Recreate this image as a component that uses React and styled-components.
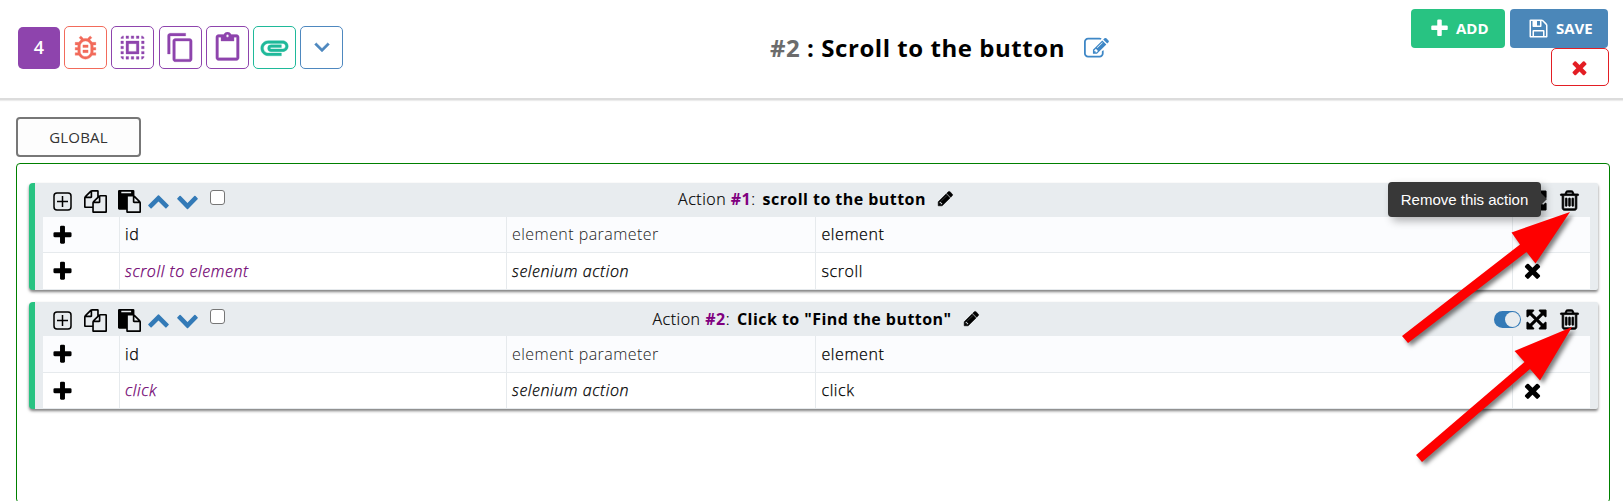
import React from 'react';
import styled, { createGlobalStyle } from 'styled-components';
import {
  MdOutlineBugReport,
  MdSelectAll,
  MdContentCopy,
  MdContentPaste,
  MdAttachment,
  MdKeyboardArrowDown,
} from 'react-icons/md';

const PATHS = {
  plus: 'M1600 736v192q0 40-28 68t-68 28h-416v416q0 40-28 68t-68 28h-192q-40 0-68-28t-28-68v-416h-416q-40 0-68-28t-28-68v-192q0-40 28-68t68-28h416v-416q0-40 28-68t68-28h192q40 0 68 28t28 68v416h416q40 0 68 28t28 68z',
  times: 'M1490 1322q0 40-28 68l-136 136q-28 28-68 28t-68-28l-294-294-294 294q-28 28-68 28t-68-28l-136-136q-28-28-28-68t28-68l294-294-294-294q-28-28-28-68t28-68l136-136q28-28 68-28t68 28l294 294 294-294q28-28 68-28t68 28l136 136q28 28 28 68t-28 68l-294 294 294 294q28 28 28 68z',
  up: 'M1683 1331l-166 165q-19 19-45 19t-45-19l-531-531-531 531q-19 19-45 19t-45-19l-166-165q-19-19-19-45.5t19-45.5l742-741q19-19 45-19t45 19l742 741q19 19 19 45.5t-19 45.5z',
  down: 'M1683 808l-742 741q-19 19-45 19t-45-19l-742-741q-19-19-19-45.5t19-45.5l166-165q19-19 45-19t45 19l531 531 531-531q19-19 45-19t45 19l166 165q19 19 19 45.5t-19 45.5z',
  pencil: 'M491 1536l91-91-235-235-91 91v107h128v128h107zm523-928q0-22-22-22-10 0-17 7l-542 542q-7 7-7 17 0 22 22 22 10 0 17-7l542-542q7-7 7-17zm-54-192l416 416-832 832h-416v-416zm683 96q0 53-37 90l-166 166-416-416 166-165q36-38 90-38 53 0 91 38l235 234q37 39 37 91z',
  trash: 'M704 736v576q0 14-9 23t-23 9h-64q-14 0-23-9t-9-23v-576q0-14 9-23t23-9h64q14 0 23 9t9 23zm256 0v576q0 14-9 23t-23 9h-64q-14 0-23-9t-9-23v-576q0-14 9-23t23-9h64q14 0 23 9t9 23zm256 0v576q0 14-9 23t-23 9h-64q-14 0-23-9t-9-23v-576q0-14 9-23t23-9h64q14 0 23 9t9 23zm128 724v-948h-896v948q0 22 7 40.5t14.5 27 10.5 8.5h832q3 0 10.5-8.5t14.5-27 7-40.5zm-672-1076h448l-48-117q-7-9-17-11h-317q-10 2-17 11zm928 32v64q0 14-9 23t-23 9h-96v948q0 83-47 143.5t-113 60.5h-832q-66 0-113-58.5t-47-141.5v-952h-96q-14 0-23-9t-9-23v-64q0-14 9-23t23-9h309l70-167q15-37 54-63t79-26h320q40 0 79 26t54 63l70 167h309q14 0 23 9t9 23z',
  files: 'M1696 384q40 0 68 28t28 68v1216q0 40-28 68t-68 28h-960q-40 0-68-28t-28-68v-288h-544q-40 0-68-28t-28-68v-672q0-40 20-88t48-76l408-408q28-28 76-48t88-20h416q40 0 68 28t28 68v328q68-40 128-40h416zm-544 213l-299 299h299v-299zm-640-384l-299 299h299v-299zm196 647l316-316v-416h-384v416q0 40-28 68t-68 28h-416v640h512v-256q0-40 20-88t48-76zm956 804v-1152h-384v416q0 40-28 68t-68 28h-416v640h896z',
  paste: 'M768 1664h896v-640h-416q-40 0-68-28t-28-68v-416h-384v1152zm256-1440v-64q0-13-9.5-22.5t-22.5-9.5h-704q-13 0-22.5 9.5t-9.5 22.5v64q0 13 9.5 22.5t22.5 9.5h704q13 0 22.5-9.5t9.5-22.5zm256 672h299l-299-299v299zm512 128v672q0 40-28 68t-68 28h-960q-40 0-68-28t-28-68v-160h-544q-40 0-68-28t-28-68v-1344q0-40 28-68t68-28h1088q40 0 68 28t28 68v328q21 13 36 28l408 408q28 28 48 76t20 88z',
  floppy: 'M512 1536h768v-384h-768v384zm896 0h128v-896q0-14-10-38.5t-20-34.5l-281-281q-10-10-34-20t-39-10v416q0 40-28 68t-68 28h-576q-40 0-68-28t-28-68v-416h-128v1280h128v-416q0-40 28-68t68-28h832q40 0 68 28t28 68v416zm-384-928v-320q0-13-9.5-22.5t-22.5-9.5h-192q-13 0-22.5 9.5t-9.5 22.5v320q0 13 9.5 22.5t22.5 9.5h192q13 0 22.5-9.5t9.5-22.5zm640 32v928q0 40-28 68t-68 28h-1344q-40 0-68-28t-28-68v-1344q0-40 28-68t68-28h928q40 0 88 20t76 48l280 280q28 28 48 76t20 88z',
  expand: 'M1411 541l-355 355 355 355 144-144q29-31 70-14 39 17 39 59v448q0 26-19 45t-45 19h-448q-42 0-59-40-17-39 14-69l144-144-355-355-355 355 144 144q31 30 14 69-17 40-59 40h-448q-26 0-45-19t-19-45v-448q0-42 40-59 39-17 69 14l144 144 355-355-355-355-144 144q-19 19-45 19-12 0-24-5-40-17-40-59v-448q0-26 19-45t45-19h448q42 0 59 40 17 39-14 69l-144 144 355 355 355-355-144-144q-31-30-14-69 17-40 59-40h448q26 0 45 19t19 45v448q0 42-39 59-13 5-25 5-26 0-45-19z',
  edit: 'M888 1184l116-116-152-152-116 116v56h96v96h56zm440-720q-16-16-33 1l-350 350q-17 17-1 33t33-1l350-350q17-17 1-33zm80 594v190q0 119-84.5 203.5t-203.5 84.5h-832q-119 0-203.5-84.5t-84.5-203.5v-832q0-119 84.5-203.5t203.5-84.5h832q63 0 117 25 15 7 18 23 3 17-9 29l-49 49q-14 14-32 8-23-6-45-6h-832q-66 0-113 47t-47 113v832q0 66 47 113t113 47h832q66 0 113-47t47-113v-126q0-13 9-22l64-64q15-15 35-7t20 29zm-96-738l288 288-672 672h-288v-288zm444 132l-92 92-288-288 92-92q28-28 68-28t68 28l152 152q28 28 28 68t-28 68z',
};

const GlobalStyle = createGlobalStyle`
  * { box-sizing: border-box; }
  body {
    margin: 0;
    background: #fff;
    color: #000;
    font-family: "Open Sans", "Noto Sans", sans-serif;
    overflow: hidden;
  }
`;

const Page = styled.div`
  position: relative;
  width: 1623px;
  height: 501px;
  overflow: hidden;
`;

const Glyph = styled.svg`
  display: block;
  flex: none;
  width: ${(p) => p.$size}px;
  height: ${(p) => p.$size}px;
  fill: ${(p) => p.$color || 'currentColor'};
  stroke: ${(p) => p.$color || 'currentColor'};
  stroke-width: ${(p) => p.$bold || 0};
`;

const Icon = ({ name, size = 23, color, bold }) => (
  <Glyph viewBox="0 0 1792 1792" $size={size} $color={color} $bold={bold} aria-hidden="true">
    <path d={PATHS[name]} />
  </Glyph>
);

const Header = styled.header`
  display: grid;
  grid-template-columns: 700px 1fr 240px;
  height: 100px;
  border-bottom: 2px solid #dcdcdc;
  box-shadow: 0 1px 1px #ececec;
`;

const Tools = styled.div`
  display: flex;
  gap: 4.2px;
  padding: 26px 0 0 17px;
`;

const ToolButton = styled.button`
  display: flex;
  align-items: center;
  justify-content: center;
  width: 43px;
  height: 43px;
  padding: 0 0 1px;
  border: 1px solid ${(p) => p.$color};
  border-radius: 5px;
  background: #fff;
  color: ${(p) => p.$color};

  svg {
    flex: none;
  }

  path:not([fill='none']) {
    stroke: currentColor;
    stroke-width: 0.25;
  }
`;

const CountBadge = styled.div`
  width: 42px;
  height: 42px;
  margin: 1px 0 0 1px;
  border-radius: 5px;
  background: #8e44ad;
  color: #fff;
  font-size: 18px;
  font-weight: 600;
  line-height: 41px;
  text-align: center;
`;

const Title = styled.h1`
  display: flex;
  margin: 0;
  padding: 31px 0 0 70px;
  font-size: 24px;
  line-height: 34px;
  font-weight: 700;
  letter-spacing: 0.55px;
  white-space: pre;
`;

const TitleNumber = styled.span`
  color: #6c6c6c;
`;

const TitleEdit = styled.span`
  padding: 5px 0 0 19px;
`;

const Actions = styled.div`
  display: flex;
  flex-wrap: wrap;
  justify-content: flex-end;
  align-content: flex-start;
  column-gap: 5px;
  padding: 9px 14px 0 0;
`;

const SolidButton = styled.button`
  display: flex;
  align-items: center;
  gap: ${(p) => p.$gap}px;
  width: ${(p) => p.$width}px;
  height: 39px;
  margin-right: ${(p) => p.$end || 0}px;
  padding: 0 0 1px 18px;
  border: 0;
  border-radius: 4px;
  background: ${(p) => p.$bg};
  color: #fff;
  font: 700 15px/20px "Open Sans", sans-serif;
`;

const CloseButton = styled.button`
  display: flex;
  align-items: center;
  justify-content: center;
  width: 58px;
  height: 38px;
  margin-left: 100px;
  padding: 1px 1px 0 0;
  border: 1px solid #e31e24;
  border-radius: 5px;
  background: #fff;
  color: #e31e24;
`;

const GlobalTab = styled.button`
  display: block;
  width: 125px;
  height: 40px;
  margin: 17px 0 6px 16px;
  padding: 0;
  border: 2px solid #777;
  border-radius: 4px;
  background: #fdfdfd;
  color: #333;
  font: 400 15px/20px "Open Sans", sans-serif;
  letter-spacing: 0.2px;
`;

const Panel = styled.main`
  display: flex;
  flex-direction: column;
  gap: 12px;
  width: 1594px;
  height: 340px;
  margin-left: 16px;
  padding: 19px 11px 0 12px;
  border: 1px solid #008000;
  border-radius: 4px;
`;

const Card = styled.section`
  height: 107px;
  padding: 0 8px 0 8px;
  border-left: 6px solid #28c382;
  border-radius: 4px 2px 2px 4px;
  background: #e8ecef;
  box-shadow: 0 2px 3px rgba(0, 0, 0, 0.5);
`;

const CardHeader = styled.div`
  display: grid;
  grid-template-columns: 380px 1fr 380px;
  height: 34px;
`;

const CardTools = styled.div`
  display: flex;
  align-items: flex-start;
  padding: 7px 0 0 10px;
`;

const PlusSquare = styled.svg`
  display: block;
  width: 19px;
  height: 19px;
  margin: 1.5px 12px 0 0;
  fill: none;
  stroke: #000;
  stroke-width: 1.5;
`;

const Spaced = styled.span`
  margin: ${(p) => p.$top || 0}px ${(p) => p.$right || 0}px 0 0;
`;

const Check = styled.input`
  appearance: none;
  width: 15px;
  height: 15px;
  margin: 0;
  border: 1px solid #767676;
  border-radius: 3px;
  background: #fff;
`;

const CardTitle = styled.div`
  display: flex;
  justify-content: center;
  padding: ${(p) => p.$top}px 1px 0 0;
  font-size: 16px;
  line-height: 26px;
  font-weight: 300;
  letter-spacing: 0.5px;
  white-space: pre;
  -webkit-text-stroke: 0.2px;
`;

const ActionNumber = styled.b`
  color: #800080;
  font-weight: 700;
  -webkit-text-stroke: 0;
`;

const ActionName = styled.b`
  margin-left: 7px;
  font-weight: 700;
  letter-spacing: 0.45px;
  -webkit-text-stroke: 0;
`;

const PencilSlot = styled.span`
  padding: 4px 0 0 11px;
`;

const CardControls = styled.div`
  display: flex;
  justify-content: flex-end;
  padding: 6px 9px 0 0;
`;

const Toggle = styled.span`
  width: 27px;
  height: 17px;
  margin: 3px 4px 0 0;
  padding: 1px;
  border-radius: 9px;
  background: #337ab7;

  &::after {
    content: '';
    display: block;
    width: 15px;
    height: 15px;
    margin-left: auto;
    border-radius: 50%;
    background: #e8ecef;
  }
`;

const Row = styled.div`
  display: grid;
  grid-template-columns: 77px 387px 309px 697px 1fr;
  height: ${(p) => p.$height}px;
  background: ${(p) => (p.$tinted ? '#fbfcfe' : '#fff')};
  border-bottom: 1px solid #e6eaed;
`;

const Cell = styled.div`
  padding: ${(p) => p.$top ?? 4}px 0 0 ${(p) => p.$left || 5}px;
  border-right: 1px solid #e6eaed;
  font-size: 16px;
  line-height: 26px;
  font-weight: 300;
  font-style: ${(p) => (p.$italic ? 'italic' : 'normal')};
  letter-spacing: ${(p) => (p.$soft ? 0.45 : 0.57)}px;
  -webkit-text-stroke: ${(p) => (p.$soft ? 0 : 0.25)}px;
  color: ${(p) => p.$color || '#000'};

  &:last-child {
    border-right: 0;
  }
`;

const Tooltip = styled.div`
  position: absolute;
  left: 1388px;
  top: 182px;
  width: 153px;
  height: 35px;
  border-radius: 4px;
  background: #383838;
  box-shadow: 4px 4px 8px rgba(0, 0, 0, 0.3);
  color: #fff;
  font: 15px/35px "Liberation Sans", Arial, sans-serif;
  text-align: center;
  white-space: nowrap;

  &::after {
    content: '';
    position: absolute;
    left: 153px;
    top: 11px;
    border: 6.5px solid transparent;
    border-left-color: #383838;
    border-right: 0;
  }
`;

const Pointers = styled.svg`
  position: absolute;
  inset: 0;
  pointer-events: none;
  fill: #fe0000;
  filter: drop-shadow(3px 3px 2px rgba(0, 0, 0, 0.5));
`;

const ActionCard = ({ number, name, action, rows, titleTop, textTop }) => (
  <Card>
    <CardHeader>
      <CardTools>
        <PlusSquare viewBox="0 0 19 19">
          <rect x="1" y="1" width="17" height="17" rx="3" />
          <path d="M9.5 4v11M4 9.5h11" />
        </PlusSquare>
        <Spaced $right={11}><Icon name="files" /></Spaced>
        <Spaced $right={6}><Icon name="paste" /></Spaced>
        <Spaced $right={6} $top={-1}><Icon name="up" color="#337ab7" /></Spaced>
        <Spaced $right={11} $top={-1}><Icon name="down" color="#337ab7" /></Spaced>
        <Check type="checkbox" />
      </CardTools>
      <CardTitle $top={titleTop}>
        Action <ActionNumber>#{number}</ActionNumber>:
        <ActionName>{name}</ActionName>
        <PencilSlot><Icon name="pencil" size={17} bold={60} /></PencilSlot>
      </CardTitle>
      <CardControls>
        <Toggle />
        <Spaced $right={10}><Icon name="expand" bold={30} /></Spaced>
        <Icon name="trash" bold={60} />
      </CardControls>
    </CardHeader>
    <Row $tinted $height={rows[0]}>
      <Cell $left={7.5} $top={6.5}><Icon name="plus" /></Cell>
      <Cell $top={textTop[0]}>id</Cell>
      <Cell $top={textTop[0]} $soft $color="#222">element parameter</Cell>
      <Cell $top={textTop[0]} $left={5.5}>element</Cell>
      <Cell />
    </Row>
    <Row $height={rows[1]}>
      <Cell $left={7.5} $top={6.5}><Icon name="plus" /></Cell>
      <Cell $top={textTop[1]} $italic $color="#700070">{action}</Cell>
      <Cell $top={textTop[1]} $italic>selenium action</Cell>
      <Cell $top={textTop[1]} $left={5.5}>{action.split(' ')[0]}</Cell>
      <Cell $left={8} $top={6}><Icon name="times" /></Cell>
    </Row>
  </Card>
);

export default function App() {
  return (
    <Page>
      <GlobalStyle />
      <Header>
        <Tools>
          <CountBadge>4</CountBadge>
          <ToolButton $color="#f26b5b"><MdOutlineBugReport size={31} /></ToolButton>
          <ToolButton $color="#8e44ad"><MdSelectAll size={31} /></ToolButton>
          <ToolButton $color="#8e44ad"><MdContentCopy size={31} /></ToolButton>
          <ToolButton $color="#8e44ad"><MdContentPaste size={31} /></ToolButton>
          <ToolButton $color="#1fb99a"><MdAttachment size={33} /></ToolButton>
          <ToolButton $color="#4e88bf"><MdKeyboardArrowDown size={30} /></ToolButton>
        </Tools>
        <Title>
          <TitleNumber>#2</TitleNumber> : Scroll to the button
          <TitleEdit><Icon name="edit" size={25} color="#3e87c6" /></TitleEdit>
        </Title>
        <Actions>
          <SolidButton $bg="#28c382" $width={94} $gap={6}>
            <Icon name="plus" size={21} />ADD
          </SolidButton>
          <SolidButton $bg="#4b87b9" $width={98} $gap={7} $end={1}>
            <Icon name="floppy" size={21} />SAVE
          </SolidButton>
          <CloseButton><Icon name="times" size={21} /></CloseButton>
        </Actions>
      </Header>
      <GlobalTab>GLOBAL</GlobalTab>
      <Panel>
        <ActionCard number={1} name="scroll to the button" action="scroll to element" rows={[36, 37]} titleTop={3} textTop={[4, 5]} />
        <ActionCard number={2} name={'Click to "Find the button"'} action="click" rows={[37, 36]} titleTop={4} textTop={[5, 4]} />
      </Panel>
      <Tooltip>Remove this action</Tooltip>
      <Pointers width="1623" height="501" viewBox="0 0 1623 501">
        <path d="M1570 212L1535.5 263.5L1526.5 252L1408 343L1402 336L1520 244.5L1511.5 232.5Z" />
        <path d="M1572 327L1540 380.5L1530 369L1422 462L1416 455L1524.5 362L1514.5 351Z" />
      </Pointers>
    </Page>
  );
}
